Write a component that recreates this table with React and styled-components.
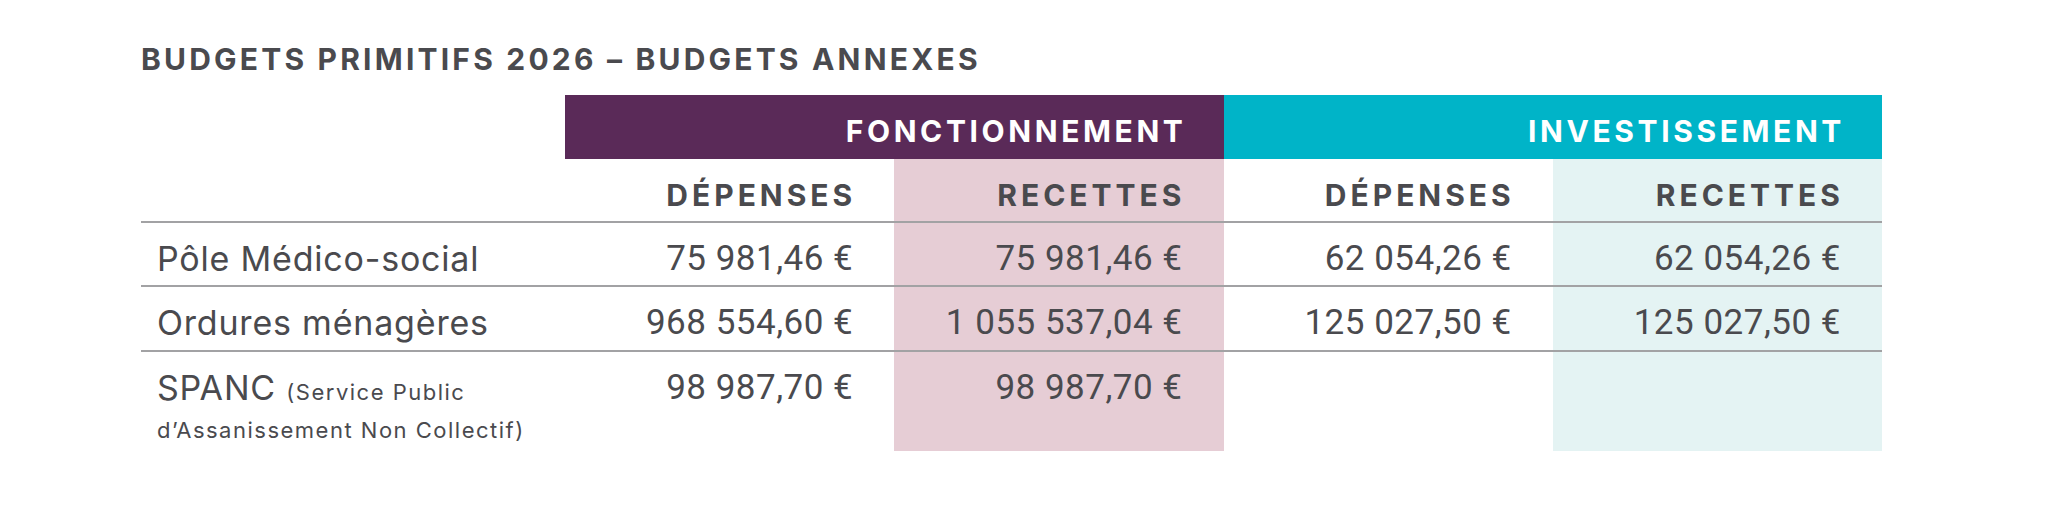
import React from "react";
import styled, { createGlobalStyle } from "styled-components";

const GlobalStyles = createGlobalStyle`
  html, body {
    margin: 0;
    padding: 0;
    background: #ffffff;
  }
`;

const LINE = "2px solid #a2a2a4";

const Page = styled.div`
  width: 2045px;
  height: 510px;
  box-sizing: border-box;
  padding: 44px 0 0 141px;
  font-family: Inter, "Noto Sans", sans-serif;
  color: #4a4a4e;
`;

const Title = styled.h1`
  margin: 0 0 21px 0;
  font-size: 30px;
  line-height: 30px;
  font-weight: 700;
  letter-spacing: 3.2px;
  color: #4a4a4e;
`;

const Table = styled.div`
  display: grid;
  grid-template-columns: 424px repeat(4, 1fr);
  width: 1741px;
`;

const Blank = styled.div`
  height: 64px;
  border-bottom: ${(p) => (p.$line ? LINE : "none")};
  box-sizing: border-box;
`;

const GroupHead = styled.div`
  grid-column: span 2;
  height: 64px;
  background: ${(p) => p.$bg};
  color: #ffffff;
  font-size: 30px;
  line-height: 30px;
  font-weight: 700;
  letter-spacing: 3.6px;
  text-align: right;
  padding: 21px 37px 0 0;
  box-sizing: border-box;
`;

const SubHead = styled.div`
  height: 64px;
  background: ${(p) => p.$bg || "transparent"};
  border-bottom: ${LINE};
  box-sizing: border-box;
  font-size: 30px;
  line-height: 30px;
  font-weight: 700;
  letter-spacing: 4px;
  text-align: right;
  padding: 21px 38px 0 0;
`;

const Label = styled.div`
  height: ${(p) => p.$h}px;
  border-bottom: ${(p) => (p.$line ? LINE : "none")};
  box-sizing: border-box;
  padding: 19px 0 0 16px;
  font-size: 34px;
  line-height: 34px;
  font-weight: 400;
  letter-spacing: 0.8px;
`;

const Small = styled.span`
  font-size: 22px;
  letter-spacing: 1.5px;
`;

const Value = styled.div`
  height: ${(p) => p.$h}px;
  background: ${(p) => p.$bg || "transparent"};
  border-bottom: ${(p) => (p.$line ? LINE : "none")};
  box-sizing: border-box;
  padding: 19px 41px 0 0;
  text-align: right;
  font-family: Roboto, sans-serif;
  font-size: 35px;
  line-height: 34px;
  font-weight: 400;
  letter-spacing: 0.5px;
`;

const PINK = "#e6cdd5";
const TEAL = "#e4f3f3";
const tints = [null, PINK, null, TEAL];

const rows = [
  { label: "Pôle Médico-social", values: ["75 981,46 €", "75 981,46 €", "62 054,26 €", "62 054,26 €"], h: 64, line: true },
  { label: "Ordures ménagères", values: ["968 554,60 €", "1 055 537,04 €", "125 027,50 €", "125 027,50 €"], h: 65, line: true },
  {
    label: (
      <>
        SPANC <Small>(Service Public</Small>
        <br />
        <Small>d’Assanissement Non Collectif)</Small>
      </>
    ),
    values: ["98 987,70 €", "98 987,70 €", "", ""],
    h: 99,
    line: false,
  },
];

export default function App() {
  return (
    <Page>
      <GlobalStyles />
      <Title>BUDGETS PRIMITIFS 2026 – BUDGETS ANNEXES</Title>
      <Table>
        <Blank />
        <GroupHead $bg="#5a2a58">FONCTIONNEMENT</GroupHead>
        <GroupHead $bg="#00b4c8">INVESTISSEMENT</GroupHead>

        <Blank $line />
        <SubHead>DÉPENSES</SubHead>
        <SubHead $bg={PINK}>RECETTES</SubHead>
        <SubHead>DÉPENSES</SubHead>
        <SubHead $bg={TEAL}>RECETTES</SubHead>

        {rows.map((row, i) => (
          <React.Fragment key={i}>
            <Label $h={row.h} $line={row.line}>{row.label}</Label>
            {row.values.map((v, j) => (
              <Value key={j} $h={row.h} $line={row.line} $bg={tints[j]}>
                {v}
              </Value>
            ))}
          </React.Fragment>
        ))}
      </Table>
    </Page>
  );
}
